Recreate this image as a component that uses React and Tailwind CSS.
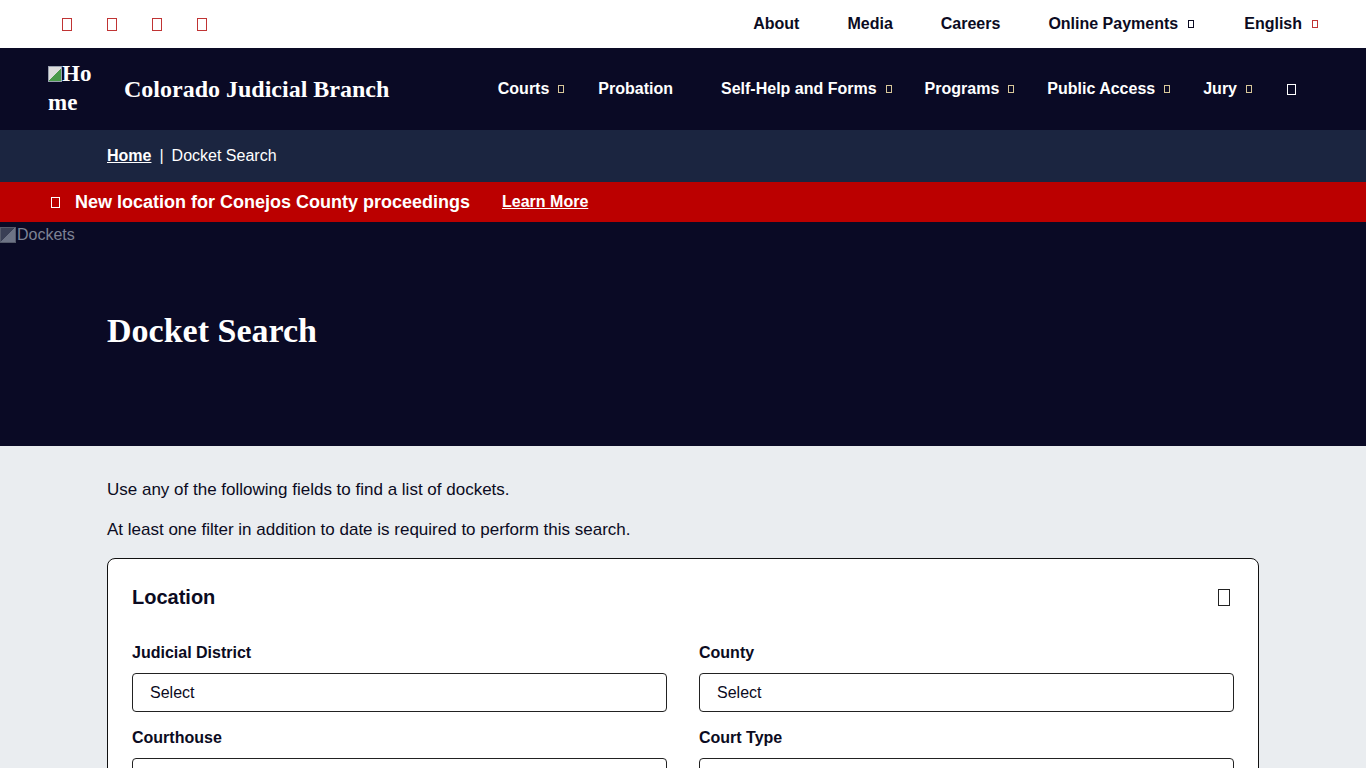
import React from "react";

const Tofu = ({ className = "" }) => (
  <span className={"inline-block border " + className} />
);

export default function App() {
  const arial = { fontFamily: '"Liberation Sans", Arial, sans-serif' };
  const serif = { fontFamily: '"Liberation Serif", "Times New Roman", serif' };
  return (
    <div style={arial} className="w-[1366px] min-h-[768px] bg-[#eaedf0] text-[#0b0b22]">
      {/* top utility bar */}
      <div className="h-12 bg-white flex items-center justify-between pl-[62px] pr-[48px]">
        <div className="flex items-center gap-[35px]">
          <Tofu className="w-[10px] h-[13px] border-[#c03434]" />
          <Tofu className="w-[10px] h-[13px] border-[#c03434]" />
          <Tofu className="w-[10px] h-[13px] border-[#c03434]" />
          <Tofu className="w-[10px] h-[13px] border-[#c03434]" />
        </div>
        <div className="flex items-center text-base font-bold text-[#0b0b22]">
          <span>About</span>
          <span className="ml-[48px]">Media</span>
          <span className="ml-[48px]">Careers</span>
          <span className="ml-[48px] flex items-center">Online Payments<Tofu className="ml-[10px] w-[6px] h-[8px] border-[#0b0b22]" /></span>
          <span className="ml-[50px] flex items-center">English<Tofu className="ml-[10px] w-[6px] h-[8px] border-[#c03434]" /></span>
        </div>
      </div>

      {/* header */}
      <div className="h-[82px] bg-[#0a0a25] flex items-center pl-12 pr-[70px]">
        <div className="flex items-start self-start pt-[11px]">
          <div style={serif} className="w-[48px] text-[23px] leading-[29px] font-bold text-white break-all">
            <span className="inline-block w-[14px] h-[16px] align-[-1px] border border-gray-400 bg-[linear-gradient(135deg,#ddd_50%,#4a9a4a_50%)]" />Home
          </div>
        </div>
        <div style={serif} className="ml-[28px] text-[24px] font-bold text-white">Colorado Judicial Branch</div>
        <div className="ml-auto flex items-center text-base font-bold text-white">
          <span className="flex items-center">Courts<Tofu className="ml-[9px] w-[6px] h-[8px] border-[#d8c79a]" /></span>
          <span className="ml-[34px]">Probation</span>
          <span className="ml-[48px] flex items-center">Self-Help and Forms<Tofu className="ml-[9px] w-[6px] h-[8px] border-[#d8c79a]" /></span>
          <span className="ml-[33px] flex items-center">Programs<Tofu className="ml-[9px] w-[6px] h-[8px] border-[#d8c79a]" /></span>
          <span className="ml-[33px] flex items-center">Public Access<Tofu className="ml-[9px] w-[6px] h-[8px] border-[#d8c79a]" /></span>
          <span className="ml-[33px] flex items-center">Jury<Tofu className="ml-[9px] w-[6px] h-[8px] border-[#d8c79a]" /></span>
          <Tofu className="ml-[35px] w-[9px] h-[11px] border-white" />
        </div>
      </div>

      {/* breadcrumb */}
      <div className="h-[52px] bg-[#1b2540] flex items-center pl-[107px] text-base text-white">
        <span className="font-bold underline">Home</span>
        <span className="mx-[8px]">|</span>
        <span>Docket Search</span>
      </div>

      {/* alert */}
      <div className="h-10 bg-[#bb0000] flex items-center pl-[51px] text-white">
        <Tofu className="w-[9px] h-[11px] border-white" />
        <span className="ml-[15px] text-[18px] font-bold">New location for Conejos County proceedings</span>
        <span className="ml-[32px] text-base font-bold underline">Learn More</span>
      </div>

      {/* hero */}
      <div className="h-[224px] bg-[#0a0a25]">
        <div className="flex items-center pt-[1px] text-base text-[#7d8294]">
          <span className="inline-block w-[16px] h-[16px] border border-[#555a6a] bg-[linear-gradient(135deg,#3a3f55_50%,#6d7385_50%)]" />
          <span className="ml-[1px]">Dockets</span>
        </div>
        <h1 style={serif} className="pl-[107px] mt-[64px] text-[34px] font-bold text-white leading-[40px]">Docket Search</h1>
      </div>

      {/* content */}
      <div className="px-[107px] pt-[34px]">
        <p className="text-[17px] leading-5">Use any of the following fields to find a list of dockets.</p>
        <p className="text-[17px] leading-5 mt-[20px]">At least one filter in addition to date is required to perform this search.</p>
        <div className="mt-[18px] bg-white border border-[#111] rounded-[8px] px-6 pt-[26px] pb-8">
          <div className="flex items-center justify-between">
            <h2 className="text-[20px] font-bold leading-6">Location</h2>
            <Tofu className="w-[12px] h-[17px] border-[#222] mr-[4px]" />
          </div>
          <div className="grid grid-cols-2 gap-x-8 mt-[34px]">
            <div>
              <div className="text-base font-bold leading-5">Judicial District</div>
              <div className="mt-[10px] h-[39px] border border-[#222] rounded-[4px] flex items-center pl-[17px] text-base">Select</div>
            </div>
            <div>
              <div className="text-base font-bold leading-5">County</div>
              <div className="mt-[10px] h-[39px] border border-[#222] rounded-[4px] flex items-center pl-[17px] text-base">Select</div>
            </div>
            <div className="mt-[16px]">
              <div className="text-base font-bold leading-5">Courthouse</div>
              <div className="mt-[10px] h-[39px] border border-[#222] rounded-[4px] flex items-center pl-[17px] text-base">Select</div>
            </div>
            <div className="mt-[16px]">
              <div className="text-base font-bold leading-5">Court Type</div>
              <div className="mt-[10px] h-[39px] border border-[#222] rounded-[4px] flex items-center pl-[17px] text-base">Select</div>
            </div>
          </div>
        </div>
      </div>
    </div>
  );
}
